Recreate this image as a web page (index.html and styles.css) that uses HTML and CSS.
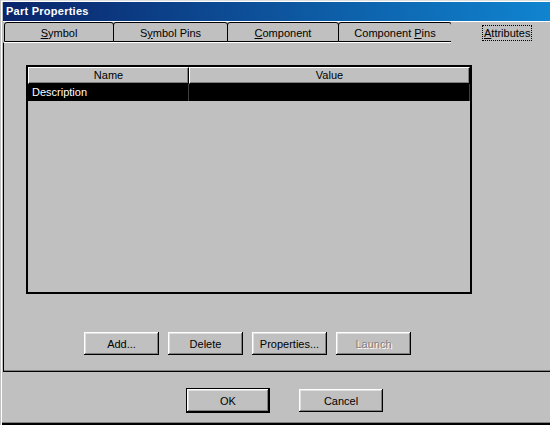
FILE: index.html
```html
<!DOCTYPE html>
<html>
<head>
<meta charset="utf-8">
<title>Part Properties</title>
<link rel="stylesheet" href="styles.css">
</head>
<body>
<div class="window">
  <div class="titlebar">Part Properties</div>
  <div class="gap"></div>
  <div class="tabs">
    <div class="tab t1"><u>S</u>ymbol</div>
    <div class="tab t2">S<u>y</u>mbol Pins</div>
    <div class="tab t3"><u>C</u>omponent</div>
    <div class="tab t4">Component <u>P</u>ins</div>
    <div class="tab selected"><span class="focus"><u>A</u>ttributes</span></div>
  </div>
  <div class="panel">
    <div class="list">
      <div class="hdr">
        <div class="hcell c1">Name</div>
        <div class="hcell c2">Value</div>
      </div>
      <div class="row selrow">
        <div class="cell c1">Description</div>
        <div class="cell c2"></div>
      </div>
    </div>
    <div class="btns">
      <button class="btn">Add...</button>
      <button class="btn">Delete</button>
      <button class="btn">Properties...</button>
      <button class="btn disabled">Launch</button>
    </div>
  </div>
  <div class="footer">
    <button class="btn big ok">OK</button>
    <button class="btn big cancel">Cancel</button>
  </div>
</div>
</body>
</html>
```
FILE: styles.css
```css
* { box-sizing: border-box; }
html, body { margin: 0; padding: 0; }
body {
  background: #c0c0c0;
  font-family: "Liberation Sans", Arial, sans-serif;
  font-size: 11px;
  color: #000;
}
.window {
  width: 550px;
  height: 425px;
  overflow: hidden;
  padding: 2px 0 3px 3px;
  background: #c0c0c0;
  box-shadow:
    inset 1px 0 #c0c0c0,
    inset 0 1px #dfdfdf,
    inset 2px 0 #fff,
    inset 0 2px #fff,
    inset 0 -2px #000,
    inset 0 -3px #808080;
}
.titlebar {
  height: 19px;
  width: 547px;
  background: linear-gradient(to right, #0a246a, #1084d0);
  color: #fff;
  font-weight: bold;
  font-size: 11px;
  line-height: 19px;
  padding-left: 3px;
  letter-spacing: 0.25px;
  white-space: nowrap;
}
.gap { height: 1px; background: #fff; }
.tabs {
  display: flex;
  height: 20px;
  margin-left: 1px;
}
.tab {
  height: 20px;
  border: 1px solid #000;
  border-radius: 3px 3px 0 0;
  text-align: center;
  line-height: 18px;
  padding-top: 1px;
  background: #c0c0c0;
  white-space: nowrap;
  flex: none;
}
.tab + .tab { margin-left: -1px; }
.t1 { width: 110px; }
.t2 { width: 115px; }
.t3 { width: 112px; }
.t4 { width: 114px; }
.tab.selected {
  width: 120px;
  height: 21px;
  border: none;
  border-radius: 0;
  position: relative;
  z-index: 1;
  padding: 3px 0 0 31px;
  line-height: 14px;
  text-align: left;
}
.focus {
  display: inline-block;
  border: 1px dotted #000;
  padding: 0 1px;
  height: 16px;
}
.panel {
  width: 560px;
  height: 330px;
  border-left: 1px solid #000;
  border-top: 1px solid #fff;
  border-bottom: 1px solid #000;
  box-shadow: inset 0 -1px #808080;
  padding: 22px 0 0 22px;
}
.list {
  width: 446px;
  height: 229px;
  border: 2px solid #000;
  background: #c0c0c0;
}
.hdr, .row { display: flex; height: 17px; }
.c1 { width: 161px; flex: none; }
.c2 { width: 281px; flex: none; }
.hcell {
  border-top: 1px solid #fff;
  border-left: 1px solid #fff;
  border-right: 1px solid #000;
  border-bottom: 1px solid #000;
  box-shadow: inset -1px -1px #808080;
  text-align: center;
  line-height: 15px;
}
.selrow { background: #000; color: #fff; }
.cell {
  line-height: 17px;
  border-right: 1px solid #404040;
}
.cell.c1 { padding-left: 4px; }
.btns {
  display: flex;
  gap: 9px;
  margin: 38px 0 0 58px;
}
.btn {
  width: 75px;
  height: 23px;
  padding: 0;
  border: none;
  background: #c0c0c0;
  font-family: "Liberation Sans", Arial, sans-serif;
  font-size: 11px;
  color: #000;
  box-shadow:
    inset -1px -1px #000,
    inset 1px 1px #fff,
    inset -2px -2px #808080,
    inset 2px 2px #dfdfdf;
}
.btn.disabled { color: #808080; text-shadow: 1px 1px #fff; }
.footer {
  height: 50px;
  display: flex;
  align-items: flex-start;
  gap: 29px;
  padding: 16px 0 0 183px;
}
.big { width: 84px; height: 23px; }
.ok {
  height: 25px;
  box-shadow:
    inset 0 0 0 1px #000,
    inset -2px -2px #000,
    inset 2px 2px #fff,
    inset -3px -3px #808080,
    inset 3px 3px #dfdfdf;
}
.cancel { margin-top: 1px; }
```
